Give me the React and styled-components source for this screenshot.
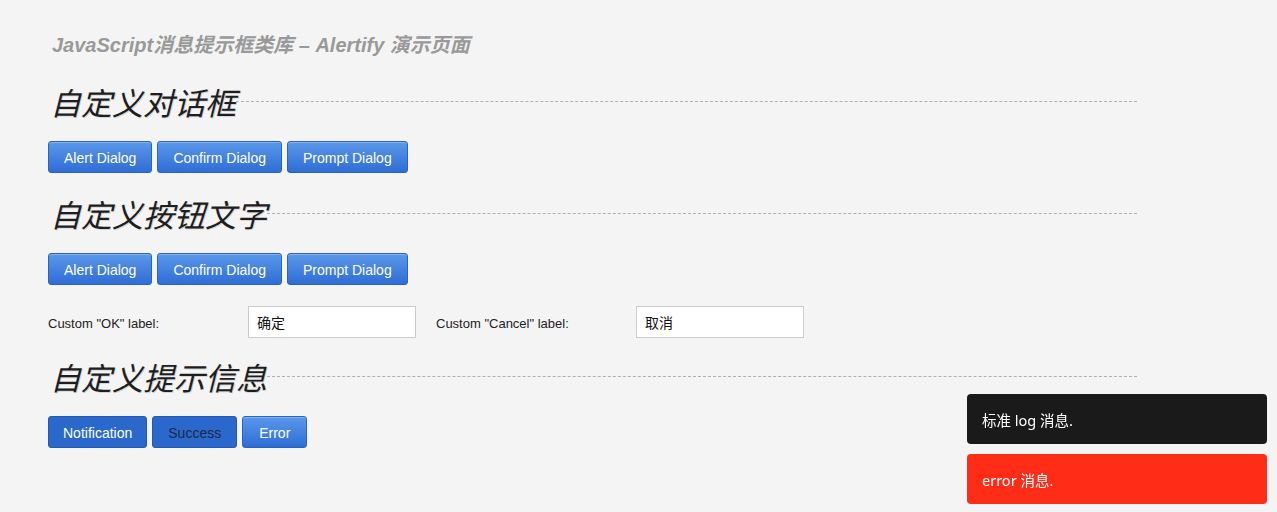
import styled, { createGlobalStyle, css } from "styled-components";

const GlobalStyle = createGlobalStyle`
  html, body {
    margin: 0;
    padding: 0;
    background: #f4f4f4;
  }
  body {
    font-family: "Liberation Sans", "Noto Sans CJK SC", sans-serif;
    color: #222;
  }
`;

const Page = styled.div`
  width: 1089px;
  padding: 33px 0 40px 48px;
`;

const Title = styled.h1`
  margin: 0 0 25px 4px;
  height: 24px;
  line-height: 24px;
  font-size: 20px;
  font-weight: bold;
  font-style: italic;
  color: #999;
`;

const Heading = styled.h2`
  display: flex;
  align-items: center;
  margin: ${(p) => p.$top || 0}px 0 19px 0;
  height: 40px;
  font-weight: normal;
`;

const HeadingText = styled.span`
  padding-left: 2px;
  font-family: "Noto Sans CJK SC", serif;
  font-style: italic;
  font-size: 31px;
  font-weight: 400;
  line-height: 40px;
  color: #1e1e1e;
  text-shadow: 1px 1px 0 rgba(0, 0, 0, 0.15);
`;

const Rule = styled.span`
  flex: 1;
  margin-top: -2px;
  border-top: 1px dashed #b0b0b0;
`;

const ButtonRow = styled.div`
  display: flex;
  gap: 5px;
`;

const Button = styled.button`
  height: 32px;
  padding: 1px ${(p) => p.$pad || 15}px 0;
  border: 1px solid #2b62c2;
  border-radius: 3px;
  font-family: "Liberation Sans", sans-serif;
  font-size: 14px;
  color: #fff;
  cursor: pointer;
  background: linear-gradient(#5a98ea, #2f6dd5);
  box-shadow: inset 0 1px 0 rgba(255, 255, 255, 0.25);
  ${(p) =>
    p.$flat &&
    css`
      background: #2a68cc;
      border-color: #2458b4;
      box-shadow: none;
    `}
  ${(p) =>
    p.$dark &&
    css`
      color: #1a2946;
    `}
`;

const FieldRow = styled.div`
  display: flex;
  align-items: center;
  margin-top: 21px;
  height: 31px;
`;

const Label = styled.label`
  width: 200px;
  padding-top: 3px;
  font-size: 13px;
  color: #222;
  margin-left: ${(p) => p.$gap || 0}px;
`;

const Input = styled.input`
  box-sizing: border-box;
  width: 168px;
  height: 32px;
  padding: 0 8px;
  border: 1px solid #ccc;
  background: #fff;
  font-family: "Liberation Sans", "Noto Sans CJK SC", sans-serif;
  font-size: 14px;
  color: #111;
  outline: none;
`;

const Logs = styled.div`
  position: fixed;
  right: 10px;
  bottom: 8px;
  display: flex;
  flex-direction: column;
  gap: 10px;
  width: 300px;
`;

const Log = styled.div`
  box-sizing: border-box;
  height: 50px;
  padding: 0 15px;
  display: flex;
  align-items: center;
  border-radius: 4px;
  font-family: "Noto Sans", "Noto Sans CJK SC", sans-serif;
  font-size: 14.5px;
  color: #fff;
  background: ${(p) => (p.$error ? "#ff2c18" : "#1a1a1a")};
`;

function SectionHeading({ top, children }) {
  return (
    <Heading $top={top}>
      <HeadingText>{children}</HeadingText>
      <Rule />
    </Heading>
  );
}

export default function App() {
  return (
    <>
      <GlobalStyle />
      <Page>
        <Title>JavaScript消息提示框类库 – Alertify 演示页面</Title>

        <SectionHeading>自定义对话框</SectionHeading>
        <ButtonRow>
          <Button>Alert Dialog</Button>
          <Button>Confirm Dialog</Button>
          <Button>Prompt Dialog</Button>
        </ButtonRow>

        <SectionHeading top={21}>自定义按钮文字</SectionHeading>
        <ButtonRow>
          <Button>Alert Dialog</Button>
          <Button>Confirm Dialog</Button>
          <Button>Prompt Dialog</Button>
        </ButtonRow>
        <FieldRow>
          <Label>Custom "OK" label:</Label>
          <Input defaultValue="确定" />
          <Label $gap={20}>Custom "Cancel" label:</Label>
          <Input defaultValue="取消" />
        </FieldRow>

        <SectionHeading top={20}>自定义提示信息</SectionHeading>
        <ButtonRow>
          <Button $flat $pad={14}>Notification</Button>
          <Button $flat $dark>Success</Button>
          <Button $pad={16}>Error</Button>
        </ButtonRow>
      </Page>

      <Logs>
        <Log>标准 log 消息.</Log>
        <Log $error>error 消息.</Log>
      </Logs>
    </>
  );
}
